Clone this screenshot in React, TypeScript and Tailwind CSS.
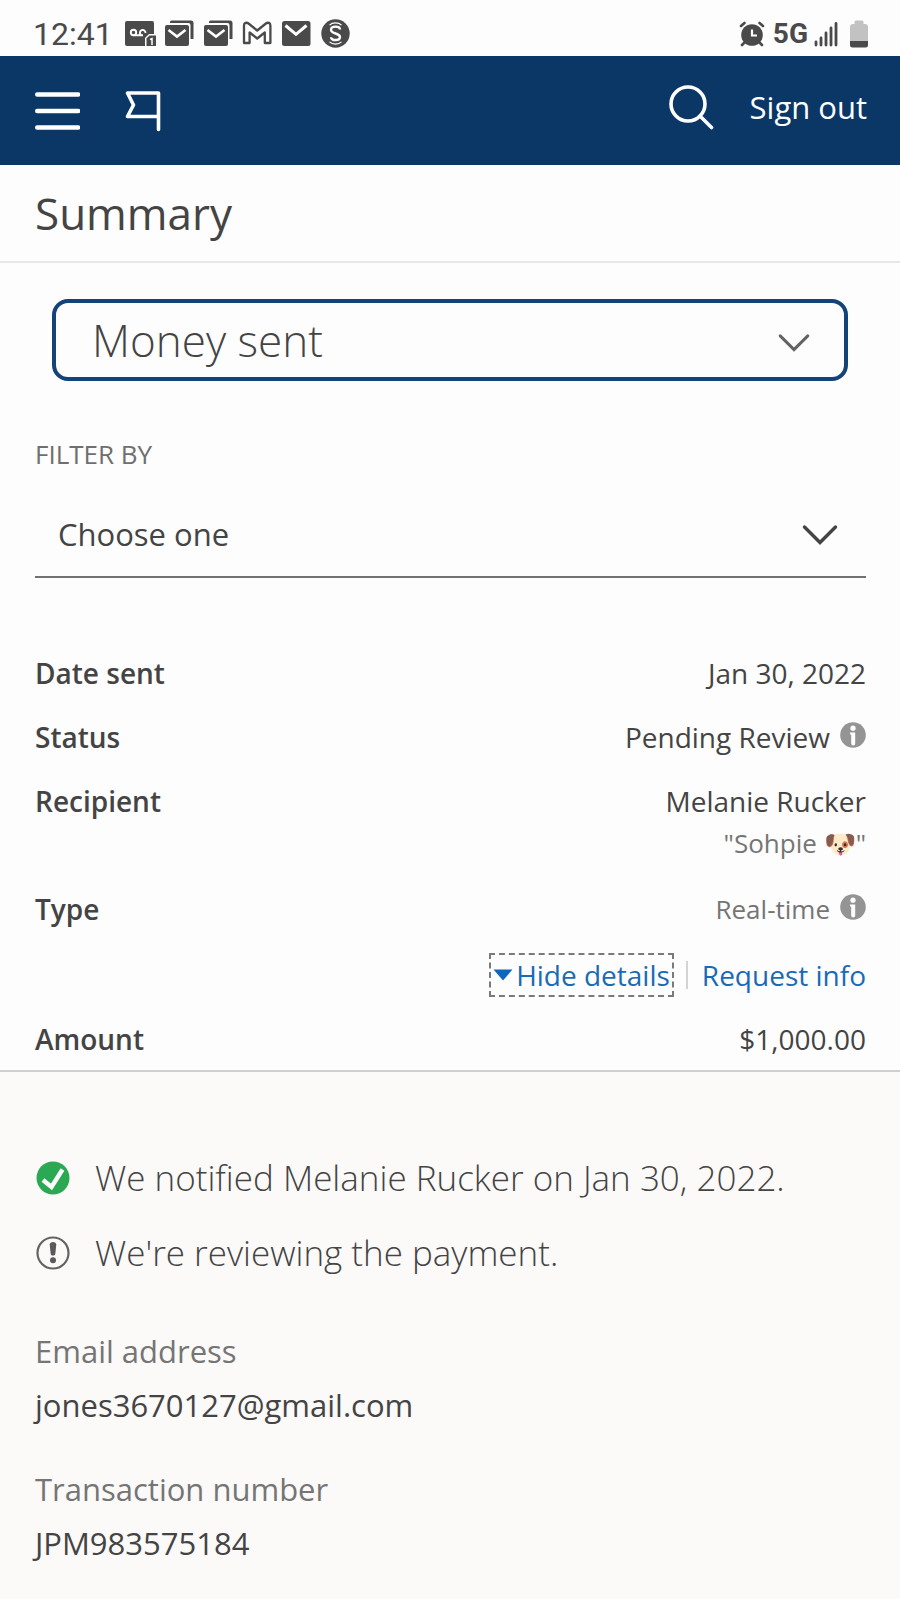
import React from "react"

interface IconProps {
	className?: string
}

const MENU_OPTIONS = ["Money sent", "Money requested", "Scheduled payments"]
const FILTER_OPTIONS = ["Choose one", "Recipient", "Date", "Status"]

const VoicemailIcon: React.FC<IconProps> = ({ className }) => (
	<svg viewBox="0 0 32 30" className={className} aria-hidden="true">
		<path d="M2 2h25a2 2 0 0 1 2 2v11h-5l-4 4v8H2a2 2 0 0 1-2-2V4a2 2 0 0 1 2-2z" fill="#4a4a4a" />
		<g fill="none" stroke="#fff" strokeWidth="1.900">
			<circle cx="8.500" cy="13.500" r="2.700" />
			<path d="M8.500 16.200h9.500M15.800 15.800a2.800 2.800 0 1 1 4.700-1.800" />
		</g>
		<path d="M24.500 16.500H31V27h-9.500v-7.500z" fill="#4a4a4a" />
		<path d="M25 20.500l2-.8V26" fill="none" stroke="#fff" strokeWidth="1.500" />
	</svg>
)

const MailStackIcon: React.FC<IconProps> = ({ className }) => (
	<svg viewBox="0 0 32 30" className={className} aria-hidden="true">
		<path d="M6 4V3a1.500 1.500 0 0 1 1.500-1.500H27A2.500 2.500 0 0 1 29.500 4v16h-3V6a2 2 0 0 0-2-2z" fill="#4a4a4a" />
		<rect x="1" y="6" width="24" height="21" rx="2" fill="#4a4a4a" />
		<path d="M4.500 11l8.500 6.500 8.500-6.500" fill="none" stroke="#fff" strokeWidth="2.600" />
	</svg>
)

const GmailIcon: React.FC<IconProps> = ({ className }) => (
	<svg viewBox="0 0 32 30" className={className} aria-hidden="true">
		<path
			d="M2 6.500C2 3.800 4.500 3 6.500 4.500l8.700 7 8.700-7c2-1.500 4.500-.7 4.500 2V24h-5.600V13.500l-7.600 6-7.600-6V24H2z"
			fill="none"
			stroke="#4a4a4a"
			strokeWidth="2.300"
			strokeLinejoin="round"
		/>
	</svg>
)

const MailIcon: React.FC<IconProps> = ({ className }) => (
	<svg viewBox="0 0 32 30" className={className} aria-hidden="true">
		<rect x="1" y="2" width="28.500" height="25" rx="2.500" fill="#4a4a4a" />
		<path d="M4.500 6.500l10.500 8.800L25.500 6.500" fill="none" stroke="#fff" strokeWidth="3" />
	</svg>
)

const CoinIcon: React.FC<IconProps> = ({ className }) => (
	<svg viewBox="0 0 32 30" className={className} aria-hidden="true">
		<circle cx="15.500" cy="14.500" r="14.200" fill="#4a4a4a" />
		<g fill="none" stroke="#fff" strokeWidth="1.300">
			<path d="M20 10.500c0-3.800-9-4-9 .2 0 4.600 9 3 9 7.300 0 4-9 4-9 .2" strokeWidth="2.400" />
			<path d="M9.500 6.200c3-3 9-3 12 0M9.500 22.800c3 3 9 3 12 0" strokeWidth="1.200" />
		</g>
	</svg>
)

const AlarmIcon: React.FC<IconProps> = ({ className }) => (
	<svg viewBox="0 0 26 26" className={className} aria-hidden="true">
		<circle cx="13" cy="14" r="10.800" fill="#4a4a4a" />
		<g fill="none" stroke="#4a4a4a" strokeWidth="2.600" strokeLinecap="round">
			<path d="M2 5l3.500-3M24 5l-3.500-3M5.500 21.500L3 24M20.500 21.500L23 24" />
		</g>
		<path d="M13 8.500V14.500h5" fill="none" stroke="#fff" strokeWidth="2.200" />
	</svg>
)

const SignalIcon: React.FC<IconProps> = ({ className }) => (
	<svg viewBox="0 0 24 26" className={className} aria-hidden="true">
		<path
			d="M2 21v3M7 17v7M12 12v12M17 7v17M22 2.500V24"
			fill="none"
			stroke="#4a4a4a"
			strokeWidth="2.800"
			strokeLinecap="round"
		/>
	</svg>
)

const BatteryIcon: React.FC<IconProps> = ({ className }) => (
	<svg viewBox="0 0 18 28" className={className} aria-hidden="true">
		<path d="M6 .5h6a1.500 1.500 0 0 1 1.500 1.500v2H15a3 3 0 0 1 3 3v14H0V7a3 3 0 0 1 3-3h1.500V2A1.500 1.500 0 0 1 6 .5z" fill="#c2c2c2" />
		<path d="M0 21h18v4a2.500 2.500 0 0 1-2.500 2.500h-13A2.500 2.500 0 0 1 0 25z" fill="#4a4a4a" />
	</svg>
)

const ChevronIcon: React.FC<IconProps> = ({ className }) => (
	<svg viewBox="0 0 36 22" className={className} aria-hidden="true">
		<path
			d="M2.500 3L18 18.500 33.500 3"
			fill="none"
			stroke="currentColor"
			strokeWidth="3.400"
			strokeLinecap="round"
			strokeLinejoin="miter"
		/>
	</svg>
)

const InfoButton: React.FC<{ label: string }> = ({ label }) => (
	<button type="button" aria-label={label} className="-mt-1">
		<svg viewBox="0 0 26 26" className="size-[26px]" aria-hidden="true">
			<circle cx="13" cy="13" r="12.800" fill="#949494" />
			<circle cx="13" cy="6.200" r="2.600" fill="#fff" />
			<path d="M10 10.500h5.200V21.500a2 2 0 0 1-4 0V12.500H10z" fill="#fff" />
		</svg>
	</button>
)

const StatusBar = () => (
	<div className="flex h-14 items-center justify-between pt-3 pr-8 pl-[33px] text-[#4a4a4a]">
		<div className="flex items-center">
			<span className="mr-3 font-[Roboto] text-[32px] leading-10">12:41</span>
			<div className="flex items-center gap-[7px]">
				<VoicemailIcon className="h-[30px] w-8" />
				<MailStackIcon className="h-[30px] w-8" />
				<MailStackIcon className="h-[30px] w-8" />
				<GmailIcon className="h-[30px] w-8" />
				<MailIcon className="h-[30px] w-8" />
				<CoinIcon className="h-[30px] w-8" />
			</div>
		</div>
		<div className="flex items-center">
			<AlarmIcon className="h-[26px] w-[26px]" />
			<span className="mr-1.5 ml-2 font-[Roboto] text-[28px] leading-10 font-bold">5G</span>
			<SignalIcon className="h-[26px] w-6" />
			<BatteryIcon className="ml-3 h-7 w-[18px]" />
		</div>
	</div>
)

const Header = () => (
	<header className="flex h-[109px] items-center justify-between bg-[#0b3767] pr-[33px] pl-[34px] text-white">
		<div className="flex items-center gap-11">
			<button type="button" aria-label="Menu">
				<svg viewBox="0 0 46 44" className="h-11 w-[46px]" aria-hidden="true">
					<path
						d="M3.200 5.500h41M3.200 22h41M3.200 38.500h41"
						fill="none"
						stroke="currentColor"
						strokeWidth="4.400"
						strokeLinecap="round"
					/>
				</svg>
			</button>
			<button type="button" aria-label="Activity">
				<svg viewBox="0 0 38 44" className="h-11 w-[38px]" aria-hidden="true">
					<path
						d="M34.500 40.500V4H3.500l6 12-6 11.500h30"
						fill="none"
						stroke="currentColor"
						strokeWidth="3.600"
						strokeLinecap="round"
						strokeLinejoin="round"
					/>
				</svg>
			</button>
		</div>
		<div className="flex items-center gap-9 pb-2">
			<button type="button" aria-label="Search">
				<svg viewBox="0 0 46 46" className="size-[46px]" aria-hidden="true">
					<g fill="none" stroke="currentColor" strokeWidth="3.600" strokeLinecap="round">
						<circle cx="20" cy="20" r="17" />
						<path d="M32 32l11.500 11.500" />
					</g>
				</svg>
			</button>
			<button type="button" className="text-[31px] leading-[42px]">
				Sign out
			</button>
		</div>
	</header>
)

interface RowProps {
	label: string
	children: React.ReactNode
}

const Row: React.FC<RowProps> = ({ label, children }) => (
	<div className="flex items-start justify-between">
		<dt className="font-semibold">{label}</dt>
		<dd className="text-right">{children}</dd>
	</div>
)

const Detail: React.FC<RowProps> = ({ label, children }) => (
	<div className="flex flex-col gap-3">
		<dt className="text-[#757575]">{label}</dt>
		<dd>{children}</dd>
	</div>
)

export default function App() {
	return (
		<div className="flex min-h-screen flex-col bg-[#fdfdfd] font-['Open_Sans',sans-serif] text-[#444444]">
			<StatusBar />
			<Header />

			<div className="border-b-2 border-[#e8e8e8] pt-[18px] pr-[34px] pb-[18px] pl-[35px]">
				<h1 className="text-[44px] leading-[60px]">Summary</h1>
			</div>

			<main className="flex flex-1 flex-col">
				<div className="mx-[52px] mt-9 grid items-center">
					<select
						aria-label="Activity type"
						className="col-start-1 row-start-1 h-[82px] w-full appearance-none rounded-[16px] border-4 border-[#14437a] bg-transparent px-9 text-[44px] leading-[60px] font-light">
						{MENU_OPTIONS.map((option) => (
							<option key={option}>{option}</option>
						))}
					</select>
					<ChevronIcon className="pointer-events-none col-start-1 row-start-1 mt-1.5 mr-[38px] h-5 w-8 justify-self-end text-[#636363]" />
				</div>

				<div className="mt-[55px] pr-[34px] pl-[35px]">
					<label htmlFor="filter" className="block text-[26px] leading-9 text-[#6f6f6f]">
						FILTER BY
					</label>
					<div className="mt-5 grid items-center">
						<select
							id="filter"
							className="col-start-1 row-start-1 h-[86px] w-full appearance-none border-b-2 border-[#717171] bg-transparent px-[23px] text-[31px] leading-[42px]">
							{FILTER_OPTIONS.map((option) => (
								<option key={option}>{option}</option>
							))}
						</select>
						<ChevronIcon className="pointer-events-none col-start-1 row-start-1 mr-7 h-[22px] w-9 justify-self-end" />
					</div>
				</div>

				<dl className="mt-[75px] flex flex-col gap-6 pr-[34px] pl-[35px] text-[28px] leading-10">
					<Row label="Date sent">Jan 30, 2022</Row>
					<Row label="Status">
						<span className="flex items-center gap-2.5">
							Pending Review
							<InfoButton label="About this status" />
						</span>
					</Row>
					<Row label="Recipient">
						Melanie Rucker
						<div className="text-[26px] leading-[44px] text-[#757575]">"Sohpie 🐶"</div>
					</Row>
					<Row label="Type">
						<span className="flex items-center gap-2.5 text-[26px] text-[#757575]">
							Real-time
							<InfoButton label="About this type" />
						</span>
					</Row>
					<div className="flex items-center justify-end pt-0.5 text-[#1a6bb5]">
						<button type="button" className="flex items-center gap-[3px] px-0.5 outline-2 outline-[#7a7a7a] outline-dashed">
							<svg viewBox="0 0 20 12" className="h-3 w-5" aria-hidden="true">
								<path d="M.5.5h19L10 11.500z" fill="#0f67bd" />
							</svg>
							Hide details
						</button>
						<span className="mr-3.5 ml-3.5 h-7 w-0.5 bg-[#d4d4d4]" />
						<a href="#request-info">Request info</a>
					</div>
					<Row label="Amount">$1,000.00</Row>
				</dl>

				<section className="mt-[11px] flex-1 border-t-2 border-[#cfcfcf] bg-[#fbfaf9] pt-[81px] pr-[34px] pb-9 pl-[35px]">
					<ul className="flex flex-col gap-[25px] text-[35px] leading-[50px] font-light">
						<li className="flex items-center gap-6">
							<svg viewBox="0 0 36 36" className="size-9 shrink-0" aria-hidden="true">
								<circle cx="18" cy="18" r="16.500" fill="#2aa952" />
								<path d="M8 20l8.500 7L27.500 9.500" fill="none" stroke="#fff" strokeWidth="4.400" />
							</svg>
							We notified Melanie Rucker on Jan 30, 2022.
						</li>
						<li className="flex items-center gap-6">
							<svg viewBox="0 0 36 36" className="size-9 shrink-0" aria-hidden="true">
								<circle cx="18" cy="18" r="15.500" fill="none" stroke="#636363" strokeWidth="2.200" />
								<path d="M14.700 9.500c0-3.500 6.600-3.500 6.600 0L20.300 19c-.4 2-4.200 2-4.600 0z" fill="#5a5a5a" />
								<circle cx="18" cy="25.300" r="3" fill="#5a5a5a" />
							</svg>
							We're reviewing the payment.
						</li>
					</ul>
					<dl className="mt-[52px] flex flex-col gap-[42px] text-[31px] leading-[42px]">
						<Detail label="Email address">jones3670127@gmail.com</Detail>
						<Detail label="Transaction number">JPM983575184</Detail>
					</dl>
				</section>
			</main>
		</div>
	)
}
